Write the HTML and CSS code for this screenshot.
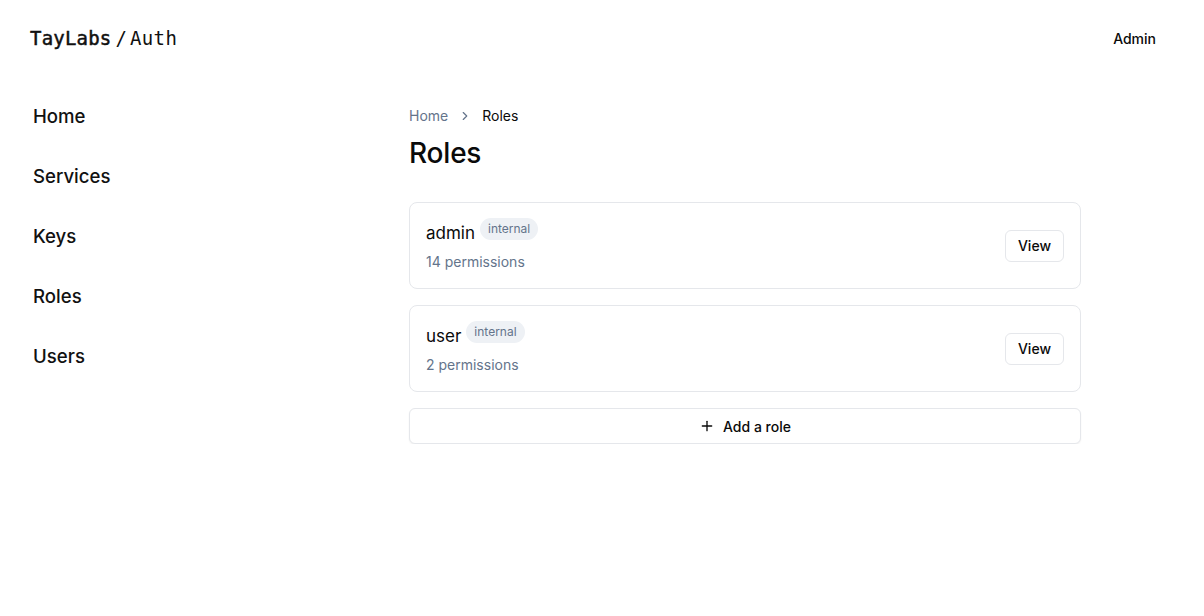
FILE: index.html
```html
<!DOCTYPE html>
<html lang="en">
  <head>
    <meta charset="UTF-8" />
    <meta name="viewport" content="width=device-width, initial-scale=1.0" />
    <title>Roles - TayLabs Auth</title>
    <link rel="stylesheet" href="styles.css">
  </head>
  <body>
    <header id="topbar">
      <a class="logo" href="#"><span class="logo-name">TayLabs</span><span class="logo-sep">/</span><span class="logo-app">Auth</span></a>
      <a class="account" href="#">Admin</a>
    </header>
    <div id="layout">
      <nav id="sidebar">
        <a href="#">Home</a>
        <a href="#">Services</a>
        <a href="#">Keys</a>
        <a href="#">Roles</a>
        <a href="#">Users</a>
      </nav>
      <main id="content">
        <div class="breadcrumb">
          <a href="#">Home</a>
          <svg width="16" height="16" viewBox="0 0 24 24" fill="none" stroke="currentColor" stroke-width="2" stroke-linecap="round" stroke-linejoin="round"><path d="m9 18 6-6-6-6"/></svg>
          <span>Roles</span>
        </div>
        <h1>Roles</h1>
        <div class="role-list">
          <div class="role-card">
            <div class="role-info">
              <div class="role-title"><span class="role-name">admin</span><span class="badge">internal</span></div>
              <div class="role-meta">14 permissions</div>
            </div>
            <button class="btn">View</button>
          </div>
          <div class="role-card">
            <div class="role-info">
              <div class="role-title"><span class="role-name">user</span><span class="badge">internal</span></div>
              <div class="role-meta">2 permissions</div>
            </div>
            <button class="btn">View</button>
          </div>
          <button class="add-role">
            <svg width="16" height="16" viewBox="0 0 24 24" fill="none" stroke="currentColor" stroke-width="2" stroke-linecap="round"><path d="M5 12h14"/><path d="M12 5v14"/></svg>
            Add a role
          </button>
        </div>
      </main>
    </div>
  </body>
</html>
```

FILE: styles.css
```css
* {
  box-sizing: border-box;
  margin: 0;
  padding: 0;
}
body {
  font-family: Inter, "Noto Sans", sans-serif;
  color: #0a0a0a;
  background: #ffffff;
}
a {
  color: inherit;
  text-decoration: none;
}

#topbar {
  display: flex;
  justify-content: space-between;
  align-items: center;
  height: 76px;
  padding: 0 48px 0 30px;
}
.logo {
  font-family: "DejaVu Sans Mono", monospace;
  font-size: 19px;
  color: #111111;
  display: flex;
  align-items: baseline;
}
.logo-name {
  -webkit-text-stroke: 0.5px #111111;
  letter-spacing: 0.2px;
}
.logo-sep {
  margin: 0 3px 0 4px;
}
.logo-app {
  letter-spacing: 0.4px;
}
.account {
  font-size: 14px;
  font-weight: 500;
}

#layout {
  display: grid;
  grid-template-columns: 376px 672px;
  padding-left: 33px;
  padding-top: 28px;
}
#sidebar {
  display: flex;
  flex-direction: column;
  gap: 36px;
}
#sidebar a {
  font-size: 18.6px;
  line-height: 24px;
  font-weight: 500;
  color: #111111;
}

.breadcrumb {
  display: flex;
  align-items: center;
  gap: 10px;
  font-size: 14px;
  line-height: 24px;
  height: 24px;
}
.breadcrumb a {
  color: #64748b;
}
.breadcrumb svg {
  color: #64748b;
  width: 14px;
  height: 14px;
}
.breadcrumb span {
  color: #0a0a0a;
}
h1 {
  font-size: 28px;
  line-height: 36px;
  font-weight: 500;
  margin-top: 7px;
  letter-spacing: -0.2px;
}

.role-list {
  display: flex;
  flex-direction: column;
  gap: 16px;
  margin-top: 31px;
}
.role-card {
  display: flex;
  align-items: center;
  justify-content: space-between;
  border: 1px solid #e5e7eb;
  border-radius: 8px;
  height: 87px;
  padding: 0 16px;
}
.role-info {
  padding-bottom: 4px;
}
.role-title {
  display: flex;
  align-items: center;
  gap: 5px;
}
.role-name {
  font-size: 17px;
  line-height: 28px;
  margin-top: 3px;
}
.badge {
  font-size: 12px;
  line-height: 22px;
  padding: 0 8px;
  border-radius: 11px;
  background: #eef1f5;
  color: #64748b;
  margin-top: -5px;
}
.role-meta {
  font-size: 14px;
  line-height: 20px;
  color: #64748b;
  margin-top: 5px;
}
.btn {
  font-family: inherit;
  font-size: 14px;
  font-weight: 500;
  color: #0a0a0a;
  background: #ffffff;
  border: 1px solid #e5e7eb;
  border-radius: 6px;
  height: 32px;
  padding: 0 12px;
  cursor: pointer;
}
.add-role {
  display: flex;
  align-items: center;
  justify-content: center;
  gap: 8px;
  height: 36px;
  font-family: inherit;
  font-size: 14px;
  font-weight: 500;
  color: #0a0a0a;
  background: #ffffff;
  border: 1px solid #e5e7eb;
  border-radius: 6px;
  box-shadow: 0 1px 2px rgba(0, 0, 0, 0.06);
  cursor: pointer;
}
```
